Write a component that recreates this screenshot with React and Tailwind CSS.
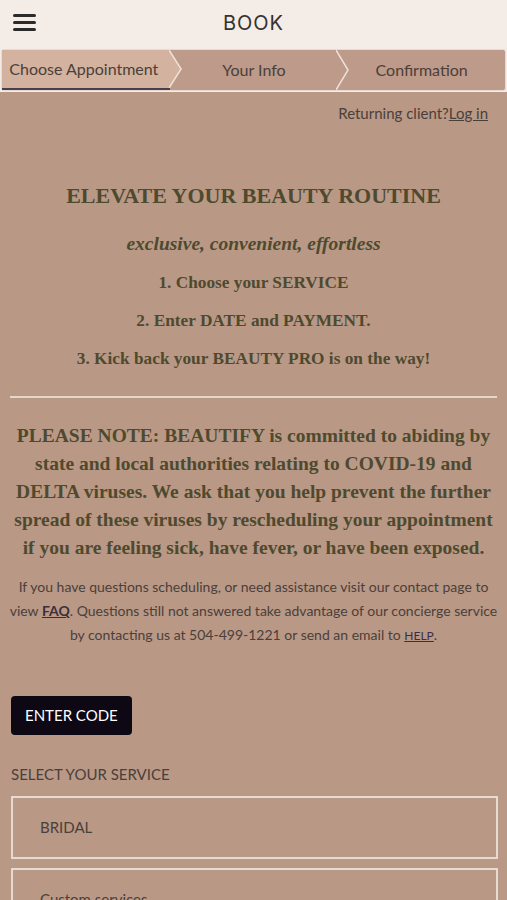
import { useState } from 'react'

const tabs = ['Choose Appointment', 'Your Info', 'Confirmation']

const note = [
  'PLEASE NOTE: BEAUTIFY is committed to abiding by',
  'state and local authorities relating to COVID-19 and',
  'DELTA viruses. We ask that you help prevent the further',
  'spread of these viruses by rescheduling your appointment',
  'if you are feeling sick, have fever, or have been exposed.',
]

function Chevron({ active }) {
  return (
    <svg className="absolute top-0 right-[-12px] h-full w-[13px] z-10" viewBox="0 0 13 40" preserveAspectRatio="none">
      {active && <polygon points="0,0 1,0 13,20 1,40 0,40" fill="#d4b2a0" />}
      <polyline points="0,0 12,20 0,40" fill="none" stroke="#ece2da" strokeWidth="1.5" />
    </svg>
  )
}

export default function App() {
  const [step] = useState(0)
  const sans = { fontFamily: 'Lato, "Open Sans", sans-serif' }
  const serif = { fontFamily: '"Liberation Serif", "Times New Roman", serif' }
  return (
    <div className="min-h-screen bg-[#b99886] text-[#4a403a]" style={sans}>
      <header className="h-[45px] bg-[#f3ece7] flex items-center relative">
        <button className="ml-[13px] flex flex-col gap-[4px] w-[23px]">
          <span className="block h-[3px] bg-[#2a2a2a] rounded-sm"></span>
          <span className="block h-[3px] bg-[#2a2a2a] rounded-sm"></span>
          <span className="block h-[3px] bg-[#2a2a2a] rounded-sm"></span>
        </button>
        <h1 className="absolute left-0 right-0 top-[8px] text-center text-[20px] tracking-[1px] text-[#333] pointer-events-none" style={{ fontFamily: 'Inter, Lato, sans-serif' }}>BOOK</h1>
      </header>

      <div className="bg-[#f3ece7] px-[1px] pt-[4px] pb-[1px]">
        <nav className="flex h-[42px] border border-[#e6dbd3] rounded-[3px] bg-[#bd9a89]">
          {tabs.map((t, i) => (
            <div key={t} className={`relative flex-1 flex items-center justify-center text-[16px] ${i === step ? 'bg-[#d4b2a0] border-b-2 border-[#4a3f4f]' : ''}`}>
              <span className={i === step ? 'pr-[4px]' : 'pl-[1px]'}>{t}</span>
              {i < tabs.length - 1 && <Chevron active={i === step} />}
            </div>
          ))}
        </nav>
      </div>

      <div className="flex justify-end pr-[19px] pt-[10px] text-[15px] leading-[22px]">
        <span>Returning client?</span><a className="underline">Log in</a>
      </div>

      <section className="text-center text-[#4e4a2e] font-bold" style={serif}>
        <h2 className="mt-[57px] text-[22px] leading-[30px]">ELEVATE YOUR BEAUTY ROUTINE</h2>
        <p className="mt-[20px] text-[19.5px] leading-[26px] italic">exclusive, convenient, effortless</p>
        <p className="mt-[14px] text-[17.3px] leading-[24px]">1. Choose your SERVICE</p>
        <p className="mt-[14px] text-[17.3px] leading-[24px]">2. Enter DATE and PAYMENT.</p>
        <p className="mt-[14px] text-[17.3px] leading-[24px]">3. Kick back your BEAUTY PRO is on the way!</p>
      </section>

      <hr className="mx-[10px] mt-[25px] border-0 h-[2px] bg-[#e6d7cd]" />

      <div className="mt-[24px] text-center text-[19.5px] leading-[28px] font-bold text-[#4e4a2e] whitespace-nowrap" style={serif}>
        {note.map(l => <p key={l}>{l}</p>)}
      </div>

      <p className="mt-[13px] text-center text-[14px] leading-[24px] whitespace-nowrap">
        If you have questions scheduling, or need assistance visit our contact page to<br />
        view <a className="underline font-bold text-[#3a2f3a]">FAQ</a>. Questions still not answered take advantage of our concierge service<br />
        by contacting us at 504-499-1221 or send an email to <a className="underline text-[12px] text-[#3a2f4a]">HELP</a>.
      </p>

      <div className="pl-[11px] pr-[9px] mt-[48px]">
        <button className="h-[39px] px-[14px] bg-[#0d0814] text-white text-[15px] rounded-[4px]">ENTER CODE</button>
        <div className="mt-[28px] text-[15px] leading-[22px]">SELECT YOUR SERVICE</div>
        <div className="mt-[11px] flex flex-col gap-[9px]">
          {['BRIDAL', 'Custom services'].map(s => (
            <div key={s} className="h-[63px] border-2 border-[#e6dbd3] flex items-center pl-[27px] text-[15px]">{s}</div>
          ))}
        </div>
      </div>
    </div>
  )
}
